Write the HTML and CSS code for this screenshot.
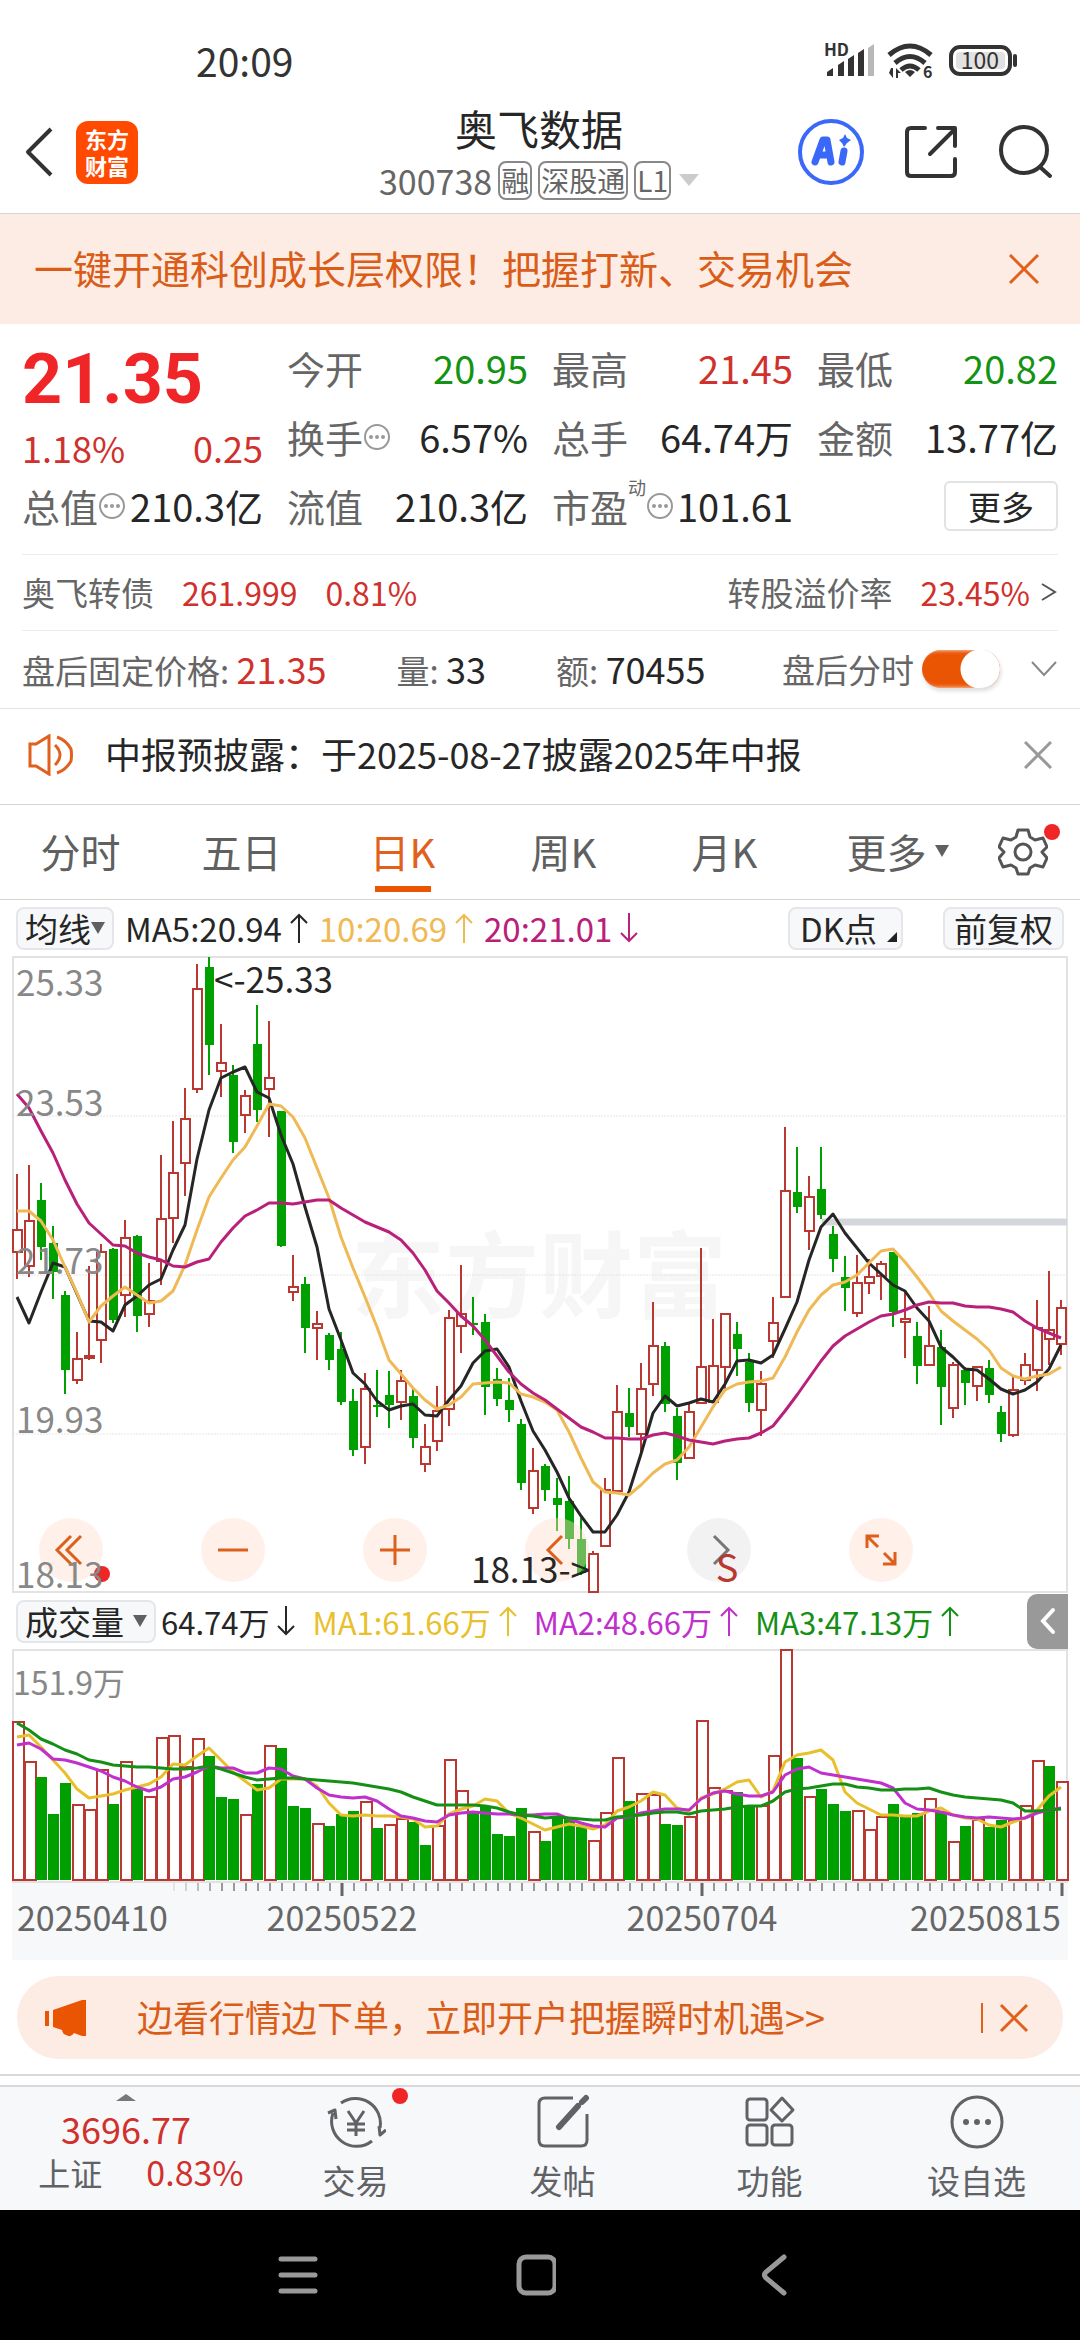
FILE: index.html
```html
<!DOCTYPE html>
<html lang="zh-CN">
<head>
<meta charset="utf-8">
<meta name="viewport" content="width=device-width, initial-scale=1">
<title>奥飞数据 300738</title>
<link rel="stylesheet" href="styles.css">
</head>
<body>
<div class="status">
  <span class="status-time">20:09</span>
  <svg class="status-icons" viewBox="820 36 200 52" width="200" height="52" aria-hidden="true">
    <text x="824" y="58" class="hd">HD</text>
    <g fill="#333">
      <path d="M827 74l6-4v8h-6zM838 67l6-4v15h-6zM848 61l6-4v21h-6zM858 55l6-4v27h-6z"/>
      <path fill="#b8b8b8" d="M868 50l6-4v32h-6z"/>
    </g>
    <g fill="none" stroke="#333" stroke-width="5">
      <path d="M889 57q21-18 42 0M895 65q15-13 30 0M901 72q9-8 18 0"/>
    </g>
    <path fill="#333" d="M910 79l-5-5q5-4 10 0zM891 70h2v10l-4-5zM896 80v-10l5 5h-3v5z"/>
    <text x="923" y="80" class="six">6</text>
    <rect x="951" y="49" width="59" height="27" rx="9" fill="#fff" stroke="#333" stroke-width="4"/>
    <rect x="956" y="54" width="49" height="17" rx="4" fill="#e2e2e2"/>
    <path d="M1015 58v9" stroke="#333" stroke-width="4" stroke-linecap="round"/>
    <text x="980" y="71" text-anchor="middle" class="level">100</text>
  </svg>
</div>

<header class="header">
  <div class="header-left">
    <button class="icon-btn" aria-label="返回"><svg width="30" height="52" viewBox="0 0 30 52"><path d="M27 3 4 26l23 23" class="ink"/></svg></button>
    <a class="logo" href="#"><span>东方</span><span>财富</span></a>
  </div>
  <div class="title">
    <h1>奥飞数据</h1>
    <p><span>300738</span><span class="tag">融</span><span class="tag">深股通</span><span class="tag">L1</span><i class="caret"></i></p>
  </div>
  <div class="header-right">
    <button class="icon-btn" aria-label="AI"><svg width="66" height="66" viewBox="0 0 66 66"><circle cx="33" cy="33" r="31" fill="none" stroke="#3a68f8" stroke-width="4"/><path fill="none" stroke="#3a68f8" stroke-width="7" stroke-linejoin="round" stroke-linecap="round" d="M17 43l8-22h4l4 22M21 36h9M46 32l-2 11"/><path fill="#3a68f8" d="M47 15l2 4 4 2-4 3-3 4-2-4-3-3 4-2z"/></svg></button>
    <button class="icon-btn" aria-label="分享"><svg width="54" height="54" viewBox="0 0 54 54"><path class="ink" stroke-linecap="round" d="M21 3H7q-4 0-4 4v40q0 4 4 4h40q4 0 4-4V34M26 29 51 4M34 3h17v18"/></svg></button>
    <button class="icon-btn" aria-label="搜索"><svg width="56" height="56" viewBox="0 0 56 56"><circle cx="26" cy="26" r="23" class="ink"/><path class="ink" stroke-linecap="round" d="M42 43l10 9"/></svg></button>
  </div>
</header>

<div class="promo">
  <a href="#">一键开通科创成长层权限！把握打新、交易机会</a>
  <button class="icon-btn" aria-label="关闭"><svg width="32" height="32" viewBox="0 0 32 32"><path class="orange" d="M2 2l28 28M30 2 2 30"/></svg></button>
</div>

<main>
<section class="quote">
  <div class="last">
    <strong>21.35</strong>
    <p><span>1.18%</span><span>0.25</span></p>
  </div>
  <dl class="cell"><dt>今开</dt><dd class="down">20.95</dd></dl>
  <dl class="cell"><dt>最高</dt><dd class="up">21.45</dd></dl>
  <dl class="cell"><dt>最低</dt><dd class="down">20.82</dd></dl>
  <dl class="cell"><dt>换手<svg class="more-dot" viewBox="0 0 28 28"><circle cx="14" cy="14" r="12"/><path d="M8 14h0M14 14h0M20 14h0"/></svg></dt><dd>6.57%</dd></dl>
  <dl class="cell"><dt>总手</dt><dd>64.74万</dd></dl>
  <dl class="cell"><dt>金额</dt><dd>13.77亿</dd></dl>
  <dl class="cell"><dt>总值<svg class="more-dot" viewBox="0 0 28 28"><circle cx="14" cy="14" r="12"/><path d="M8 14h0M14 14h0M20 14h0"/></svg></dt><dd>210.3亿</dd></dl>
  <dl class="cell"><dt>流值</dt><dd>210.3亿</dd></dl>
  <dl class="cell"><dt>市盈<sup>动</sup><svg class="more-dot" viewBox="0 0 28 28"><circle cx="14" cy="14" r="12"/><path d="M8 14h0M14 14h0M20 14h0"/></svg></dt><dd>101.61</dd></dl>
  <div class="cell cell-end"><button class="more-btn">更多</button></div>
</section>

<section class="bond">
  <span>奥飞转债</span><span class="up">261.999</span><span class="up">0.81%</span>
  <a href="#"><span>转股溢价率</span><span class="up">23.45%</span><svg width="18" height="24" viewBox="0 0 18 24"><path d="M2 4l13 8-13 8" fill="none" stroke="#555" stroke-width="2"/></svg></a>
</section>

<section class="after">
  <p>盘后固定价格: <b class="up">21.35</b></p>
  <p>量: <b>33</b></p>
  <p>额: <b>70455</b></p>
  <label class="switch-label">盘后分时<input class="switch" type="checkbox" checked></label>
  <button class="icon-btn" aria-label="展开"><svg width="28" height="18" viewBox="0 0 28 18"><path d="M2 2l12 13L26 2" fill="none" stroke="#888" stroke-width="2"/></svg></button>
</section>

<section class="notice">
  <svg width="48" height="42" viewBox="0 0 48 42"><g class="orange"><path d="M3 10h6L22 2v38L9 32H3zM28 11q10 10 0 20M30 3q9 3 14 12 1 6 0 12-5 9-14 12"/></g></svg>
  <a href="#">中报预披露：于2025-08-27披露2025年中报</a>
  <button class="icon-btn" aria-label="关闭"><svg width="28" height="28" viewBox="0 0 28 28"><path d="M1 1l26 26M27 1 1 27" fill="none" stroke="#999" stroke-width="3"/></svg></button>
</section>

<nav class="tabs">
  <button>分时</button><button>五日</button><button class="active">日K</button><button>周K</button><button>月K</button>
  <button class="tab-more">更多<i class="caret caret-dark"></i></button>
  <button class="gear dot-host" aria-label="设置"><svg width="50" height="50" viewBox="0 0 50 50"><path d="M20 3h10l2 7 5 3 8-2 4 9-5 5 5 6-4 9-8-2-5 3-2 6H20l-2-6-5-3-8 2-4-9 5-6-5-5 4-9 8 2 5-3z" fill="none" stroke="#555" stroke-width="3" stroke-linejoin="round"/><circle cx="25" cy="25" r="8" fill="none" stroke="#555" stroke-width="3"/></svg><i class="dot"></i></button>
</nav>

<section class="ma-row">
  <button class="chip">均线<i class="caret caret-dark"></i></button>
  <span class="ma">MA5:20.94<svg class="arrow"><use href="#up"/></svg></span>
  <span class="ma ma10">10:20.69<svg class="arrow"><use href="#up"/></svg></span>
  <span class="ma ma20">20:21.01<svg class="arrow"><use href="#down"/></svg></span>
  <button class="chip chip-dk">DK点<svg width="10" height="10" viewBox="0 0 10 10"><path d="M10 0v10H0z" fill="#222"/></svg></button>
  <button class="chip">前复权</button>
</section>

<section class="chart">
  <svg id="price" viewBox="12 956 1056 637" role="img" aria-label="日K线"></svg>
  <div class="controls">
    <button aria-label="最早"><svg viewBox="0 0 64 64"><path d="M32 18 18 32l14 14M42 18 28 32l14 14"/></svg><i class="dot"></i></button>
    <button aria-label="缩小"><svg viewBox="0 0 64 64"><path d="M17 32h30"/></svg></button>
    <button aria-label="放大"><svg viewBox="0 0 64 64"><path d="M17 32h30M32 17v30"/></svg></button>
    <button aria-label="左移"><svg viewBox="0 0 64 64"><path d="M37 18 23 32l14 14"/></svg></button>
    <button class="off" aria-label="右移"><svg viewBox="0 0 64 64"><path d="M27 18l14 14-14 14"/></svg></button>
    <button aria-label="全屏"><svg viewBox="0 0 64 64"><path d="M18 30V18h12M19 19l10 10M46 34v12H34M45 45 35 35"/></svg></button>
  </div>
  <svg id="labels" class="labels" viewBox="12 956 1056 637"></svg>
</section>

<section class="vol-row">
  <button class="chip">成交量<i class="caret caret-dark"></i></button>
  <span class="ma">64.74万<svg class="arrow"><use href="#down"/></svg></span>
  <span class="ma v5">MA1:61.66万<svg class="arrow"><use href="#up"/></svg></span>
  <span class="ma v10">MA2:48.66万<svg class="arrow"><use href="#up"/></svg></span>
  <span class="ma v20">MA3:47.13万<svg class="arrow"><use href="#up"/></svg></span>
  <button class="drawer" aria-label="展开侧栏"><svg width="16" height="28" viewBox="0 0 16 28"><path d="M13 3 3 14l10 11" fill="none" stroke="#fff" stroke-width="4" stroke-linecap="round"/></svg></button>
</section>
<section class="chart">
  <svg id="volume" viewBox="12 1649 1056 233" role="img" aria-label="成交量"></svg>
  <svg id="axis" class="axis" viewBox="12 1882 1056 78"></svg>
</section>

<div class="ad">
  <svg width="42" height="38" viewBox="0 0 42 38"><path fill="#ea5504" d="M0 12h4v15H0zM8 11 37 1h4v36h-4l-8-3q-3 5-8 2-3 0-4-5l-9-3z"/></svg>
  <a href="#">边看行情边下单，立即开户把握瞬时机遇&gt;&gt;</a>
  <button class="icon-btn" aria-label="关闭"><svg width="30" height="30" viewBox="0 0 30 30"><path class="orange" d="M2 2l26 26M28 2 2 28"/></svg></button>
</div>
</main>

<nav class="bottom">
  <a class="index" href="#">
    <i class="caret-up"></i>
    <span class="index-value">3696.77</span>
    <span class="index-sub">上证 <b>0.83%</b></span>
  </a>
  <a href="#"><span class="dot-host"><svg width="60" height="56" viewBox="0 0 60 56"><g class="gray"><path d="M15 9A25 25 0 0 1 54 34M46 47A25 25 0 0 1 7 19M2 19l7-3 1 9M60 36l-6 5-1-9M22 17l8 12 8-12M30 29v13M21 30h18M21 36h18"/></g></svg><i class="dot"></i></span>交易</a>
  <a href="#"><svg width="60" height="56" viewBox="0 0 60 56"><g class="gray"><path d="M40 4H12q-6 0-6 6v36q0 6 6 6h36q6 0 6-6V20"/></g><path d="M26 33 45 12M49 8l4-4" stroke="#606266" stroke-width="6" fill="none" stroke-linecap="round"/></svg>发帖</a>
  <a href="#"><svg width="60" height="56" viewBox="0 0 60 56"><g class="gray"><rect x="7" y="5" width="20" height="21" rx="3"/><rect x="7" y="31" width="20" height="20" rx="3"/><rect x="32" y="31" width="20" height="20" rx="3"/><path d="M42 4l11 12-11 11-11-11z"/></g></svg>功能</a>
  <a href="#"><svg width="60" height="56" viewBox="0 0 60 56"><g class="gray"><circle cx="30" cy="28" r="25"/></g><g fill="#606266"><circle cx="19" cy="28" r="3"/><circle cx="30" cy="28" r="3"/><circle cx="41" cy="28" r="3"/></g></svg>设自选</a>
</nav>

<div class="sysnav">
  <button class="icon-btn" aria-label="任务"><svg width="40" height="44" viewBox="0 0 40 44"><path d="M3 6h34M3 22h34M3 38h34"/></svg></button>
  <button class="icon-btn" aria-label="主页"><svg width="40" height="44" viewBox="0 0 40 44"><rect x="3" y="4" width="36" height="36" rx="7"/></svg></button>
  <button class="icon-btn" aria-label="返回"><svg width="40" height="44" viewBox="0 0 40 44"><path d="M30 4 12 19q-3 3 0 6l18 15"/></svg></button>
</div>

<svg class="defs" aria-hidden="true">
  <symbol id="up" viewBox="0 0 18 30"><path d="M9 30V2M1 10l8-8 8 8"/></symbol>
  <symbol id="down" viewBox="0 0 18 30"><path d="M9 0v28M1 20l8 8 8-8"/></symbol>
</svg>
<script src="chart.js"></script>
</body>
</html>
```
FILE: styles.css
```css
* { box-sizing: border-box; }
body {
  margin: 0;
  min-height: 100vh;
  display: flex;
  flex-direction: column;
  background: #fff;
  color: #262626;
  font-family: "Noto Sans CJK SC", "Noto Sans", sans-serif;
  font-size: 33px;
}
h1, p, dl, dd { margin: 0; }
button { border: 0; padding: 0; background: none; font: inherit; color: inherit; }
a { color: inherit; text-decoration: none; }
svg { display: block; }
b { font-weight: 400; }
.defs { position: absolute; width: 0; height: 0; }
.icon-btn { display: flex; }
.ink { fill: none; stroke: #333; stroke-width: 4; stroke-linejoin: round; }
.orange { fill: none; stroke: #e0601c; stroke-width: 3; }
.gray { fill: none; stroke: #606266; stroke-width: 3; stroke-linejoin: round; }
.up { color: #d0312d; }
.down { color: #139313; }
.dot-host { position: relative; }
.dot { position: absolute; width: 16px; height: 16px; border-radius: 50%; background: #f02528; }
.caret { border: 10px solid transparent; border-top: 12px solid #ccc; border-bottom: 0; }
.caret-dark { border-width: 12px 7px 0; border-top-color: #606060; }

.status { display: flex; justify-content: space-between; align-items: center; height: 84px; padding: 36px 60px 0 196px; }
.status-time { font-size: 39px; line-height: 44px; color: #333; }
.status-icons { overflow: visible; }
.status-icons text { fill: #333; font-weight: 700; }
.status-icons .hd { font-size: 17px; }
.status-icons .six { font-size: 16px; }
.status-icons .level { font-size: 23px; font-weight: 400; }

.header { display: grid; grid-template-columns: 1fr auto 1fr; align-items: center; height: 130px; padding: 7px 26px 0 24px; border-bottom: 1px solid #d4d4d4; }
.header-left { display: flex; align-items: center; gap: 22px; }
.header-right { display: flex; align-items: center; justify-content: flex-end; gap: 40px; }
.logo { display: flex; flex-direction: column; align-items: center; justify-content: center; width: 62px; height: 63px; border-radius: 12px; background: #ff4a00; color: #fff; font-size: 22px; line-height: 27px; font-weight: 700; }
.title { padding-top: 4px; }
.title h1 { font-size: 42px; line-height: 52px; font-weight: 400; text-align: center; }
.title p { display: flex; align-items: center; gap: 6px; height: 52px; font-size: 34px; color: #666; }
.tag { height: 39px; padding: 0 1px; border: 2px solid #888; border-radius: 8px; font-size: 28px; line-height: 34px; color: #666; }
.title .caret { margin-left: 2px; }

.promo { display: flex; justify-content: space-between; align-items: center; height: 110px; padding: 0 40px 0 34px; background: #fdece3; color: #d95d19; font-size: 39px; }
.promo a, .ad a, .notice a { padding-bottom: 4px; }

.quote { display: grid; grid-template-columns: repeat(4, 1fr); grid-auto-rows: 69px; column-gap: 24px; margin: 0 22px; padding: 9px 0 14px; font-size: 38px; }
.last { grid-row: span 2; padding-top: 2px; color: #d0312d; }
.last strong { display: block; font-family: Roboto, "Noto Sans CJK SC", sans-serif; font-size: 70px; line-height: 88px; font-weight: 700; color: #f02528; }
.last p { display: flex; justify-content: space-between; line-height: 48px; font-size: 36px; }
.cell { display: flex; justify-content: space-between; align-items: center; white-space: nowrap; }
.cell dt { display: flex; align-items: center; color: #666; }
.cell-end { justify-content: flex-end; }
.cell sup { align-self: flex-start; width: 18px; font-size: 18px; line-height: 18px; }
.more-dot { width: 28px; height: 28px; fill: none; stroke: #999; stroke-width: 2; }
.more-dot path { stroke-width: 4; stroke-linecap: round; }
.more-btn { width: 114px; height: 50px; border: 2px solid #e2e2e2; border-radius: 6px; font-size: 33px; line-height: 42px; }

.bond, .after { display: flex; align-items: center; margin: 0 22px; border-top: 1px solid #ececec; color: #666; }
.bond .up, .after .up { color: #d0312d; }
.bond { height: 76px; padding-bottom: 2px; gap: 28px; }
.bond .up { font-size: 32px; }
.bond a { display: flex; align-items: center; margin-left: auto; }
.bond a .up { margin: 0 10px 0 28px; }
.after { height: 78px; padding-bottom: 2px; gap: 30px; }
.after p { padding-bottom: 2px; }
.after p + p { margin-left: 40px; }
.after b { color: #262626; font-size: 36px; }
.switch-label { display: flex; align-items: center; gap: 8px; margin-left: auto; }
.switch { appearance: none; width: 78px; height: 38px; margin: 0; border-radius: 19px; background: radial-gradient(circle at 58px 19px, #fff 19px, transparent 20px), #ea5504; box-shadow: inset -4px 0 4px #fff, 1px 3px 4px #ddd; }

.notice { display: flex; align-items: center; height: 96px; padding: 0 28px 4px 27px; border-top: 1px solid #e4e4e4; font-size: 36px; }
.notice a { flex: 1; margin-left: 30px; }

.tabs { display: grid; grid-template-columns: repeat(5, 161fr) 185fr 90fr; height: 95px; border-top: 1px solid #d4d4d4; font-size: 40px; color: #606060; }
.tabs button { display: flex; align-items: center; justify-content: center; padding-bottom: 3px; }
.tabs .active { color: #e0601c; background: linear-gradient(#ea5504, #ea5504) center 81px / 56px 6px no-repeat; }
.tabs .tab-more { gap: 8px; }
.tabs .gear { padding: 0 24px 0 0; }
.gear .dot { top: 19px; right: 20px; }

.ma-row, .vol-row { display: flex; align-items: center; padding: 0 16px; }
.ma-row { height: 57px; border-top: 1px solid #d4d4d4; gap: 11px; }
.chip { display: flex; align-items: center; height: 43px; padding: 0 7px; border: 2px solid #e4e6e9; border-radius: 8px; background: #f7f8fa; font-size: 33px; white-space: nowrap; }
.ma-row .chip:last-child { margin-left: 29px; padding: 0 9px; }
.chip-dk { gap: 10px; margin-left: auto; padding: 0 4px 0 10px; }
.chip-dk svg { align-self: flex-end; margin-bottom: 6px; }
.ma { display: flex; align-items: center; gap: 8px; white-space: nowrap; }
.arrow { width: 18px; height: 30px; fill: none; stroke: currentColor; stroke-width: 2; }
.ma10 { color: #efba55; }
.ma20 { color: #b8207a; }
.v5 { color: #e8c02c; }
.v10 { color: #c030cc; }
.v20 { color: #159015; }

.chart { position: relative; margin: 0 12px; }
.chart > svg { width: 100%; height: auto; overflow: visible; }
.chart > .labels { position: absolute; inset: 0; pointer-events: none; }
.chart text { font-size: 35px; fill: #888; }
.chart .mark { fill: #262626; }
.chart .sell { fill: #b93832; font-size: 38px; }
.chart .watermark { fill: #f6f6f6; font-size: 94px; font-weight: 700; }
.chart .vol-max { font-size: 32px; }
.axis { background: #f7f8fa; }
.chart .axis text { font-size: 34px; fill: #666; }
.controls { position: absolute; left: 27px; right: 0; bottom: 11px; display: flex; gap: 98px; }
.controls button { position: relative; width: 64px; height: 64px; border-radius: 50%; background: rgba(255, 222, 203, .42); }
.controls svg { fill: none; stroke: #dc5f1c; stroke-width: 3; }
.controls .off { background: rgba(200, 200, 200, .24); }
.controls .off svg { stroke: #777; }
.controls .dot { left: 55px; top: 48px; }

.vol-row { height: 56px; padding: 0 12px 0 16px; gap: 17px; font-size: 31px; }
.vol-row .chip { gap: 9px; margin-right: -12px; }
.drawer { display: flex; align-items: center; justify-content: center; width: 41px; height: 55px; margin-left: auto; border-radius: 10px 0 0 10px; background: #999; }

.ad { display: flex; align-items: center; height: 83px; margin: 16px 17px 15px; padding: 0 34px 0 28px; border-radius: 42px; background: #fdece3; color: #d95d19; font-size: 36px; }
.ad a { flex: 1; margin-left: 50px; }
.ad button { padding-left: 16px; border-left: 2px solid #e0601c; }

main { border-bottom: 2px solid #d8d9dc; }
.bottom { display: grid; grid-template-columns: 252fr repeat(4, 207fr); height: 125px; margin-top: 9px; background: #f7f8fa; border-top: 2px solid #d8d9dc; font-size: 33px; color: #606266; }
.bottom a { display: flex; flex-direction: column; align-items: center; gap: 8px; padding-top: 7px; line-height: 44px; }
.bottom .index { gap: 0; }
.caret-up { border: 10px solid transparent; border-bottom: 7px solid #77787c; border-top: 0; }
.index-value { margin-top: 5px; font-size: 36px; color: #d0312d; }
.index-sub { display: flex; gap: 44px; padding-left: 30px; font-size: 32px; }
.index-sub b { color: #d0312d; font-size: 34px; }
.bottom .dot { right: -22px; top: -6px; }

.sysnav { display: flex; flex: 1; min-height: 130px; align-items: center; justify-content: center; gap: 198px; padding-right: 8px; background: #000; }
.sysnav svg { fill: none; stroke: #999; stroke-width: 5; stroke-linecap: round; }
```
FILE: chart.js
```js
// Each row: high, body top, body bottom, low, volume top (chart units)
const days = `
r 1174 1230 1252 1279 1722|r 1165 1221 1266 1277 1762|g 1183 1200 1247 1260 1777|g 1226 1243 1272 1299 1814
g 1291 1295 1370 1394 1783|r 1332 1359 1380 1384 1805|r 1266 1356 1358 1360 1810|r 1244 1252 1340 1363 1770
g 1248 1249 1320 1323 1804|r 1220 1238 1295 1317 1762|g 1235 1236 1316 1332 1789|r 1263 1301 1314 1327 1797
r 1155 1219 1261 1285 1738|r 1121 1173 1218 1243 1736|r 1088 1119 1163 1196 1767|r 964 989 1089 1093 1739
g 957 967 1045 1075 1756|r 1024 1063 1071 1097 9999|g 1065 1075 1142 1153 1799|r 1090 1096 1115 1133 1815
g 1005 1044 1110 1122 1784|r 1021 1078 1089 1137 1746|g 1111 1111 1246 1247 1748|r 1255 1287 1292 1301 9999
g 1277 1284 1328 1353 1808|r 1311 1324 1328 1360 1824|g 1333 1335 1360 1370 1826|g 1332 1349 1402 1405 1814
g 1389 1401 1450 1456 1811|r 1373 1389 1447 1464 1802|g 1370 1405 1406 1417 1828|g 1371 1395 1405 1428 9998
r 1370 1381 1402 1420 1819|g 1389 1396 1438 1448 1822|r 1424 1447 1464 1472 9997|r 1386 1411 1441 1451 1826
r 1310 1318 1409 1426 1760|r 1265 1314 1326 1353 1791|g 1297 1323 1324 1335 1813|g 1314 1322 1387 1415 1807
g 1368 1379 1399 1406 1834|g 1378 1400 1410 1422 1836|g 1419 1424 1483 1490 1808|r 1448 1471 1508 1514 1832
g 1464 1466 1490 1501 1841|g 1478 1498 1505 1531 1817|g 1476 1501 1539 1549 1817|g 1518 1539 1573 1575 1827
r 1551 1554 1592 1592 1841|r 1478 1490 1546 1546 1813|r 1385 1412 1491 1491 1758|g 1388 1413 1427 1437 1801
r 1363 1389 1434 1452 1794|r 1302 1346 1384 1396 1795|g 1342 1346 1404 1412 1824|g 1408 1416 1463 1480 1825
r 1404 1412 1458 1458 1817|r 1248 1367 1403 1403 1721|r 1319 1366 1402 1402 1788|r 1314 1314 1367 1390 1791
g 1322 1334 1349 1376 1792|g 1353 1362 1403 1412 1806|r 1371 1384 1410 1436 1806|r 1297 1323 1341 1358 1756
r 1127 1191 1297 1297 1650|g 1147 1192 1207 1213 1758|r 1176 1197 1231 1250 1797|g 1147 1189 1215 1219 1789
g 1226 1234 1259 1272 1804|g 1256 1277 1288 1311 1811|r 1255 1283 1313 1317 1811|r 1259 1277 1283 1294 1830
r 1261 1264 1276 1300 1817|g 1252 1252 1312 1327 1804|r 1292 1319 1322 1358 9996|g 1322 1336 1366 1384 1813
r 1306 1346 1365 1365 1799|g 1330 1347 1387 1425 1812|r 1362 1365 1408 1418 1842|g 1367 1370 1383 1405 1826
r 1367 1367 1386 1401 1820|g 1360 1368 1395 1403 1827|g 1406 1412 1434 1442 1820|r 1377 1390 1435 1437 1820
r 1353 1365 1380 1385 1806|r 1300 1328 1370 1391 1761|r 1271 1330 1339 1365 9995|r 1300 1308 1344 1355 1782`
  .trim().split(/[|\n]/).map(s => { const [c, ...n] = s.split(' '); return [c, ...n.map(Number)]; });

// Days whose volume bar takes a colour other than the candle's
const volumeOnly = { 17: ['g', 1797], 23: ['g', 1806], 31: ['r', 1825], 34: ['g', 1845], 74: ['g', 1815], 86: ['g', 1766] };

const ma5 = [1297,1323,1292,1263,1267,1294,1321,1322,1331,1305,1296,1285,1279,1250,1225,1159,1110,1078,1072,1067,1092,1098,1135,1164,1207,1247,1309,1340,1373,1384,1401,1410,1406,1404,1415,1416,1400,1386,1363,1351,1349,1367,1401,1431,1450,1472,1498,1516,1532,1532,1515,1492,1454,1413,1396,1406,1403,1399,1402,1384,1361,1360,1363,1355,1329,1302,1260,1227,1214,1233,1248,1263,1274,1285,1291,1308,1321,1347,1357,1369,1370,1379,1389,1394,1390,1382,1369,1345];
const ma10 = [1211,1211,1221,1240,1267,1293,1322,1306,1296,1287,1295,1303,1301,1291,1265,1230,1197,1178,1160,1147,1126,1104,1106,1117,1138,1168,1198,1237,1268,1297,1327,1360,1374,1388,1400,1409,1405,1397,1384,1383,1382,1383,1394,1397,1402,1410,1432,1458,1482,1492,1493,1495,1485,1473,1464,1460,1447,1427,1407,1390,1384,1382,1381,1378,1357,1332,1310,1295,1285,1282,1275,1263,1251,1249,1262,1277,1293,1311,1321,1330,1339,1350,1368,1376,1379,1376,1374,1367];
const ma20 = [1094,1108,1131,1153,1180,1204,1223,1234,1245,1246,1253,1257,1260,1266,1267,1262,1259,1242,1228,1216,1210,1203,1203,1204,1202,1200,1200,1208,1215,1222,1227,1232,1240,1253,1270,1291,1303,1316,1326,1340,1356,1372,1384,1393,1400,1409,1418,1427,1432,1438,1438,1439,1439,1435,1433,1436,1440,1442,1444,1441,1439,1438,1433,1426,1411,1395,1378,1361,1346,1336,1329,1322,1316,1314,1310,1305,1302,1303,1303,1306,1307,1307,1309,1312,1321,1328,1333,1338];
const v5 = [1737,1735,1747,1760,1773,1789,1798,1796,1794,1790,1787,1784,1777,1764,1765,1756,1748,1760,1772,1781,1790,1788,1779,1779,1779,1786,1803,1815,1816,1815,1816,1816,1817,1819,1827,1826,1814,1809,1806,1799,1801,1813,1818,1824,1830,1827,1824,1826,1829,1825,1811,1807,1801,1792,1795,1808,1811,1798,1794,1789,1782,1780,1797,1791,1762,1755,1753,1750,1760,1792,1803,1809,1815,1815,1816,1816,1811,1808,1815,1818,1819,1825,1827,1822,1818,1810,1796,1787];
const v10 = [1745,1743,1749,1759,1760,1763,1767,1771,1777,1781,1787,1791,1787,1779,1777,1772,1766,1768,1768,1773,1773,1768,1769,1776,1779,1788,1795,1797,1798,1797,1801,1809,1816,1818,1821,1822,1815,1813,1812,1813,1814,1814,1815,1815,1814,1814,1819,1823,1826,1827,1818,1817,1813,1811,1809,1809,1810,1799,1793,1791,1794,1796,1796,1792,1775,1769,1767,1773,1775,1777,1779,1781,1783,1788,1803,1809,1810,1812,1815,1817,1818,1817,1818,1819,1818,1813,1810,1808];
const v20 = [1723,1730,1739,1744,1750,1754,1760,1762,1765,1766,1767,1767,1768,1769,1769,1768,1766,1769,1773,1777,1780,1779,1778,1778,1779,1780,1781,1782,1783,1785,1787,1789,1792,1797,1801,1805,1805,1805,1805,1806,1808,1812,1815,1816,1818,1817,1818,1819,1820,1820,1817,1816,1815,1813,1812,1812,1814,1811,1810,1809,1807,1806,1806,1801,1792,1789,1788,1786,1784,1784,1787,1788,1790,1790,1789,1789,1788,1792,1795,1797,1798,1799,1800,1803,1811,1811,1810,1809];

const RED = '#b93832', GREEN = '#00a000';
const x = i => 17 + 12 * i;
const line = (ys, color) => `<polyline fill="none" stroke="${color}" stroke-width="3" stroke-linejoin="round" points="${ys.map((y, i) => x(i) + ',' + y).join(' ')}"/>`;
const text = (tx, ty, s, cls = '', anchor = 'start') => `<text x="${tx}" y="${ty}" class="${cls}" text-anchor="${anchor}">${s}</text>`;
const frame = (y, h) => `<rect x="13" y="${y}" width="1054" height="${h}" fill="none" stroke="#e2e2e2" stroke-width="2"/>`;

let p = frame(957, 635) + text(351, 1311, '东方财富', 'watermark');
for (const y of [1116, 1275, 1434]) p += `<path d="M13 ${y}H1067" stroke="#e4e4e4" stroke-width="1" stroke-dasharray="2 1"/>`;
p += '<path d="M822 1222H1067" stroke="#d3d7db" stroke-width="7"/>';
days.forEach(([c, hi, top, bot, lo], i) => {
  const cx = x(i);
  if (c === 'g') {
    p += `<path d="M${cx} ${hi}V${lo}" stroke="${GREEN}" stroke-width="2"/><rect x="${cx - 4}" y="${top}" width="9" height="${Math.max(2, bot - top)}" fill="${GREEN}"/>`;
  } else {
    p += `<path d="M${cx} ${hi}V${top}M${cx} ${bot}V${lo}" stroke="${RED}" stroke-width="2"/><rect x="${cx - 4}" y="${top}" width="9" height="${Math.max(2, bot - top)}" fill="none" stroke="${RED}" stroke-width="2"/>`;
  }
});
p += line(ma5, '#262626') + line(ma10, '#efba55') + line(ma20, '#b8207a');
document.getElementById('price').innerHTML = p;

document.getElementById('labels').innerHTML =
  text(16, 996, '25.33') + text(16, 1116, '23.53') + text(16, 1274, '21.73') + text(16, 1433, '19.93') + text(16, 1588, '18.13')
  + text(214, 993, '&lt;-25.33', 'mark') + text(590, 1583, '18.13-&gt;', 'mark', 'end') + text(727, 1582, 'S', 'sell', 'middle');

let v = frame(1650, 232);
days.forEach((d, i) => {
  const [c, top] = volumeOnly[i] || [d[0], d[5]];
  v += c === 'g'
    ? `<rect x="${x(i) - 5}" y="${top}" width="11" height="${1880 - top}" fill="${GREEN}"/>`
    : `<rect x="${x(i) - 4}" y="${top}" width="11" height="${1880 - top}" fill="#fff" stroke="${RED}" stroke-width="2"/>`;
});
v += line(v5, '#e8c02c') + line(v10, '#c030cc') + line(v20, '#159015') + text(13, 1695, '151.9万', 'vol-max');
document.getElementById('volume').innerHTML = v;

let a = '';
for (let i = 13; i < 88; i++) {
  const major = i % 30 === 27;
  a += `<path d="M${x(i) + 1} 1883v${major ? 13 : 8}" stroke="${major ? '#666' : '#999'}" stroke-width="${major ? 3 : 2}" opacity="${Math.min(1, (i - 12) / 5)}"/>`;
}
a += text(17, 1931, '20250410') + text(342, 1931, '20250522', '', 'middle') + text(702, 1931, '20250704', '', 'middle') + text(1061, 1931, '20250815', '', 'end');
document.getElementById('axis').innerHTML = a;
```
